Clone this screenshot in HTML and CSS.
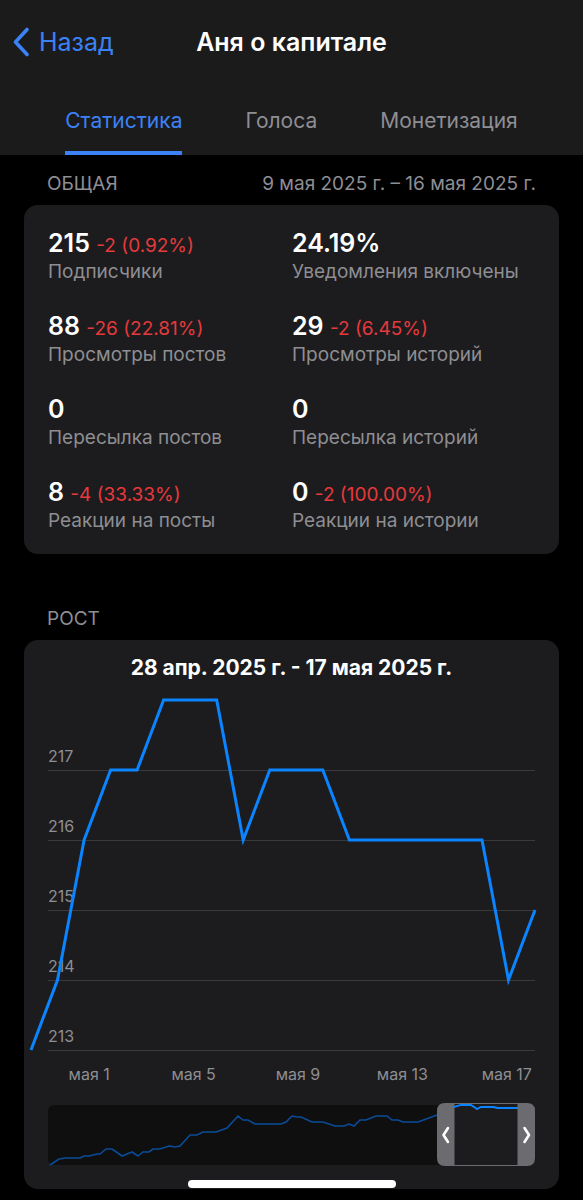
FILE: index.html
```html
<!DOCTYPE html>
<html lang="ru">
<head>
    <meta charset="UTF-8">
    <meta name="viewport" content="width=device-width, initial-scale=1.0">
    <title>Аня о капитале — Статистика</title>
    <link rel="stylesheet" href="styles.css">
</head>
<body>
    <header class="top">
        <div class="nav">
            <a class="back" href="#">
                <svg class="back-icon" width="18" height="30" viewBox="0 0 18 30">
                    <path d="M15 2.5 L3.5 15 L15 27.5" fill="none" stroke="#3b82f6" stroke-width="3.6" stroke-linecap="round" stroke-linejoin="round"/>
                </svg>
                <span>Назад</span>
            </a>
            <h1 class="title">Аня о капитале</h1>
            <span></span>
        </div>
        <nav class="tabs">
            <a class="tab active" href="#">Статистика</a>
            <a class="tab" href="#">Голоса</a>
            <a class="tab" href="#">Монетизация</a>
        </nav>
    </header>

    <main>
        <div class="section-head">
            <span>ОБЩАЯ</span>
            <span>9 мая 2025 г. – 16 мая 2025 г.</span>
        </div>
        <section class="card stats">
            <div class="stat">
                <div class="value">215 <span class="delta">-2 (0.92%)</span></div>
                <div class="label">Подписчики</div>
            </div>
            <div class="stat">
                <div class="value">24.19%</div>
                <div class="label">Уведомления включены</div>
            </div>
            <div class="stat">
                <div class="value">88 <span class="delta">-26 (22.81%)</span></div>
                <div class="label">Просмотры постов</div>
            </div>
            <div class="stat">
                <div class="value">29 <span class="delta">-2 (6.45%)</span></div>
                <div class="label">Просмотры историй</div>
            </div>
            <div class="stat">
                <div class="value">0</div>
                <div class="label">Пересылка постов</div>
            </div>
            <div class="stat">
                <div class="value">0</div>
                <div class="label">Пересылка историй</div>
            </div>
            <div class="stat">
                <div class="value">8 <span class="delta">-4 (33.33%)</span></div>
                <div class="label">Реакции на посты</div>
            </div>
            <div class="stat">
                <div class="value">0 <span class="delta">-2 (100.00%)</span></div>
                <div class="label">Реакции на истории</div>
            </div>
        </section>

        <div class="section-head growth-head">
            <span>РОСТ</span>
        </div>
        <section class="card growth">
            <h2 class="chart-title">28 апр. 2025 г. - 17 мая 2025 г.</h2>
            <svg class="chart" width="535" height="372" viewBox="0 0 535 372">
                <g stroke="#3a3a3c" stroke-width="1">
                    <line x1="24" y1="82.5" x2="511" y2="82.5"/>
                    <line x1="24" y1="152.5" x2="511" y2="152.5"/>
                    <line x1="24" y1="222.5" x2="511" y2="222.5"/>
                    <line x1="24" y1="292.5" x2="511" y2="292.5"/>
                    <line x1="24" y1="362.5" x2="511" y2="362.5"/>
                </g>
                <g class="axis-y">
                    <text x="24" y="74">217</text>
                    <text x="24" y="144">216</text>
                    <text x="24" y="214">215</text>
                    <text x="24" y="284">214</text>
                    <text x="24" y="354">213</text>
                </g>
                <polyline fill="none" stroke="#0a84ff" stroke-width="3" stroke-linejoin="miter"
                    points="7,362 33.5,292 60.1,152 86.6,82 113.1,82 139.6,12 166.2,12 192.7,12 219.2,152 245.8,82 272.3,82 298.8,82 325.4,152 351.9,152 378.4,152 405,152 431.5,152 458,152 484.5,292 511,222"/>
            </svg>
            <div class="axis-x">
                <span>мая 1</span>
                <span>мая 5</span>
                <span>мая 9</span>
                <span>мая 13</span>
                <span>мая 17</span>
            </div>
            <svg class="navigator" width="487" height="64" viewBox="0 0 487 64">
                <defs>
                    <clipPath id="win">
                        <rect x="406" y="0" width="64" height="64"/>
                    </clipPath>
                </defs>
                <rect x="0" y="2" width="487" height="60" rx="6" fill="#0f0f10"/>
                <rect x="406" y="0.5" width="64" height="62" fill="#1c1c1e" stroke="#6c6c70" stroke-width="1"/>
                <polyline fill="none" stroke="#0a4c98" stroke-width="1.6"
                    points="2,62 11,56 17,55 32,55 36,53 41,53 49,51 52,51 58,46 64,46 67,48 74,53 84,49 90,53 95,49 101,49 105,46 112,46 121,43 127,44 132,43 142,32 149,32 155,29 168,29 179,25 190,13 195,17 200,17 207,21 233,21 238,19 244,13 249,14 253,14 264,19 275,19 287,23 296,23 301,21 306,23 312,17 318,17 328,13 339,13 344,17 350,17 355,19 370,19 389,12 406,4 413,2 423,2 429,6 433,4 445,4 450,5 471,5 487,5"/>
                <polyline clip-path="url(#win)" fill="none" stroke="#0a84ff" stroke-width="1.8"
                    points="389,12 406,4 413,2 423,2 429,6 433,4 445,4 450,5 471,5 487,5"/>
                <path d="M406 0 H397 Q389 0 389 8 V55 Q389 63 397 63 H406 Z" fill="#6c6c70"/>
                <path d="M470 0 H479 Q487 0 487 8 V55 Q487 63 479 63 H470 Z" fill="#6c6c70"/>
                <path d="M400 25 L395.5 32 L400 39" fill="none" stroke="#fff" stroke-width="2.6" stroke-linecap="round" stroke-linejoin="round"/>
                <path d="M476.5 25 L481 32 L476.5 39" fill="none" stroke="#fff" stroke-width="2.6" stroke-linecap="round" stroke-linejoin="round"/>
            </svg>
        </section>
    </main>

    <div class="home-bar"></div>
</body>
</html>
```

FILE: styles.css
```css
body {
    margin: 0;
    background-color: #000;
    color: #fff;
    font-family: Inter, "Noto Sans", sans-serif;
    width: 583px;
    height: 1200px;
    overflow: hidden;
    position: relative;
}
a {
    text-decoration: none;
}

.top {
    background-color: #1b1b1c;
    height: 155px;
    display: flex;
    flex-direction: column;
}
.nav {
    margin-top: 20px;
    height: 44px;
    display: grid;
    grid-template-columns: 1fr auto 1fr;
    align-items: center;
}
.back {
    display: flex;
    align-items: center;
    gap: 9px;
    padding-left: 12px;
    color: #3b82f6;
    font-size: 25px;
}
.back-icon {
    display: block;
}
.title {
    margin: 0;
    font-size: 25px;
    font-weight: 600;
}
.tabs {
    margin-top: auto;
    display: flex;
    justify-content: center;
    gap: 63px;
}
.tab {
    color: #8e8e93;
    font-size: 21px;
    line-height: 24px;
    padding-bottom: 18px;
    border-bottom: 4px solid transparent;
}
.tab.active {
    color: #3b82f6;
    border-bottom-color: #3b82f6;
    border-radius: 2px 2px 0 0;
}

.section-head {
    display: flex;
    justify-content: space-between;
    align-items: flex-end;
    box-sizing: border-box;
    padding: 0 47px 10px;
    height: 50px;
    line-height: 22px;
    color: #8e8e93;
    font-size: 19px;
}
.growth-head {
    margin-top: 36px;
}

.card {
    margin: 0 24px;
    background-color: #1c1c1e;
    border-radius: 14px;
}

.stats {
    display: grid;
    grid-template-columns: 244px 1fr;
    row-gap: 28px;
    padding: 24px 0 21px 24px;
}
.value {
    font-size: 25px;
    line-height: 28px;
    height: 28px;
    font-weight: 600;
}
.delta {
    color: #e5393c;
    font-size: 19px;
    line-height: 20px;
    font-weight: 400;
}
.label {
    margin-top: 3px;
    color: #8e8e93;
    font-size: 19px;
    line-height: 24px;
}

.growth {
    padding: 14px 0 22px;
    height: 549px;
    box-sizing: border-box;
}
.chart-title {
    margin: 0;
    text-align: center;
    font-size: 21px;
    line-height: 28px;
    font-weight: 700;
}
.chart {
    display: block;
    margin-top: 6px;
}
.axis-y text {
    font-family: Inter, sans-serif;
    font-size: 16px;
    fill: #8e8e93;
}
.axis-x {
    display: grid;
    grid-template-columns: repeat(5, 1fr);
    padding-left: 13px;
    margin-top: 4px;
    line-height: 20px;
    font-size: 16px;
    color: #8e8e93;
    text-align: center;
}
.navigator {
    display: block;
    margin: 19px 0 0 24px;
}

.home-bar {
    position: absolute;
    left: 188px;
    top: 1180px;
    width: 208px;
    height: 8px;
    border-radius: 4px;
    background-color: #fff;
}
```
